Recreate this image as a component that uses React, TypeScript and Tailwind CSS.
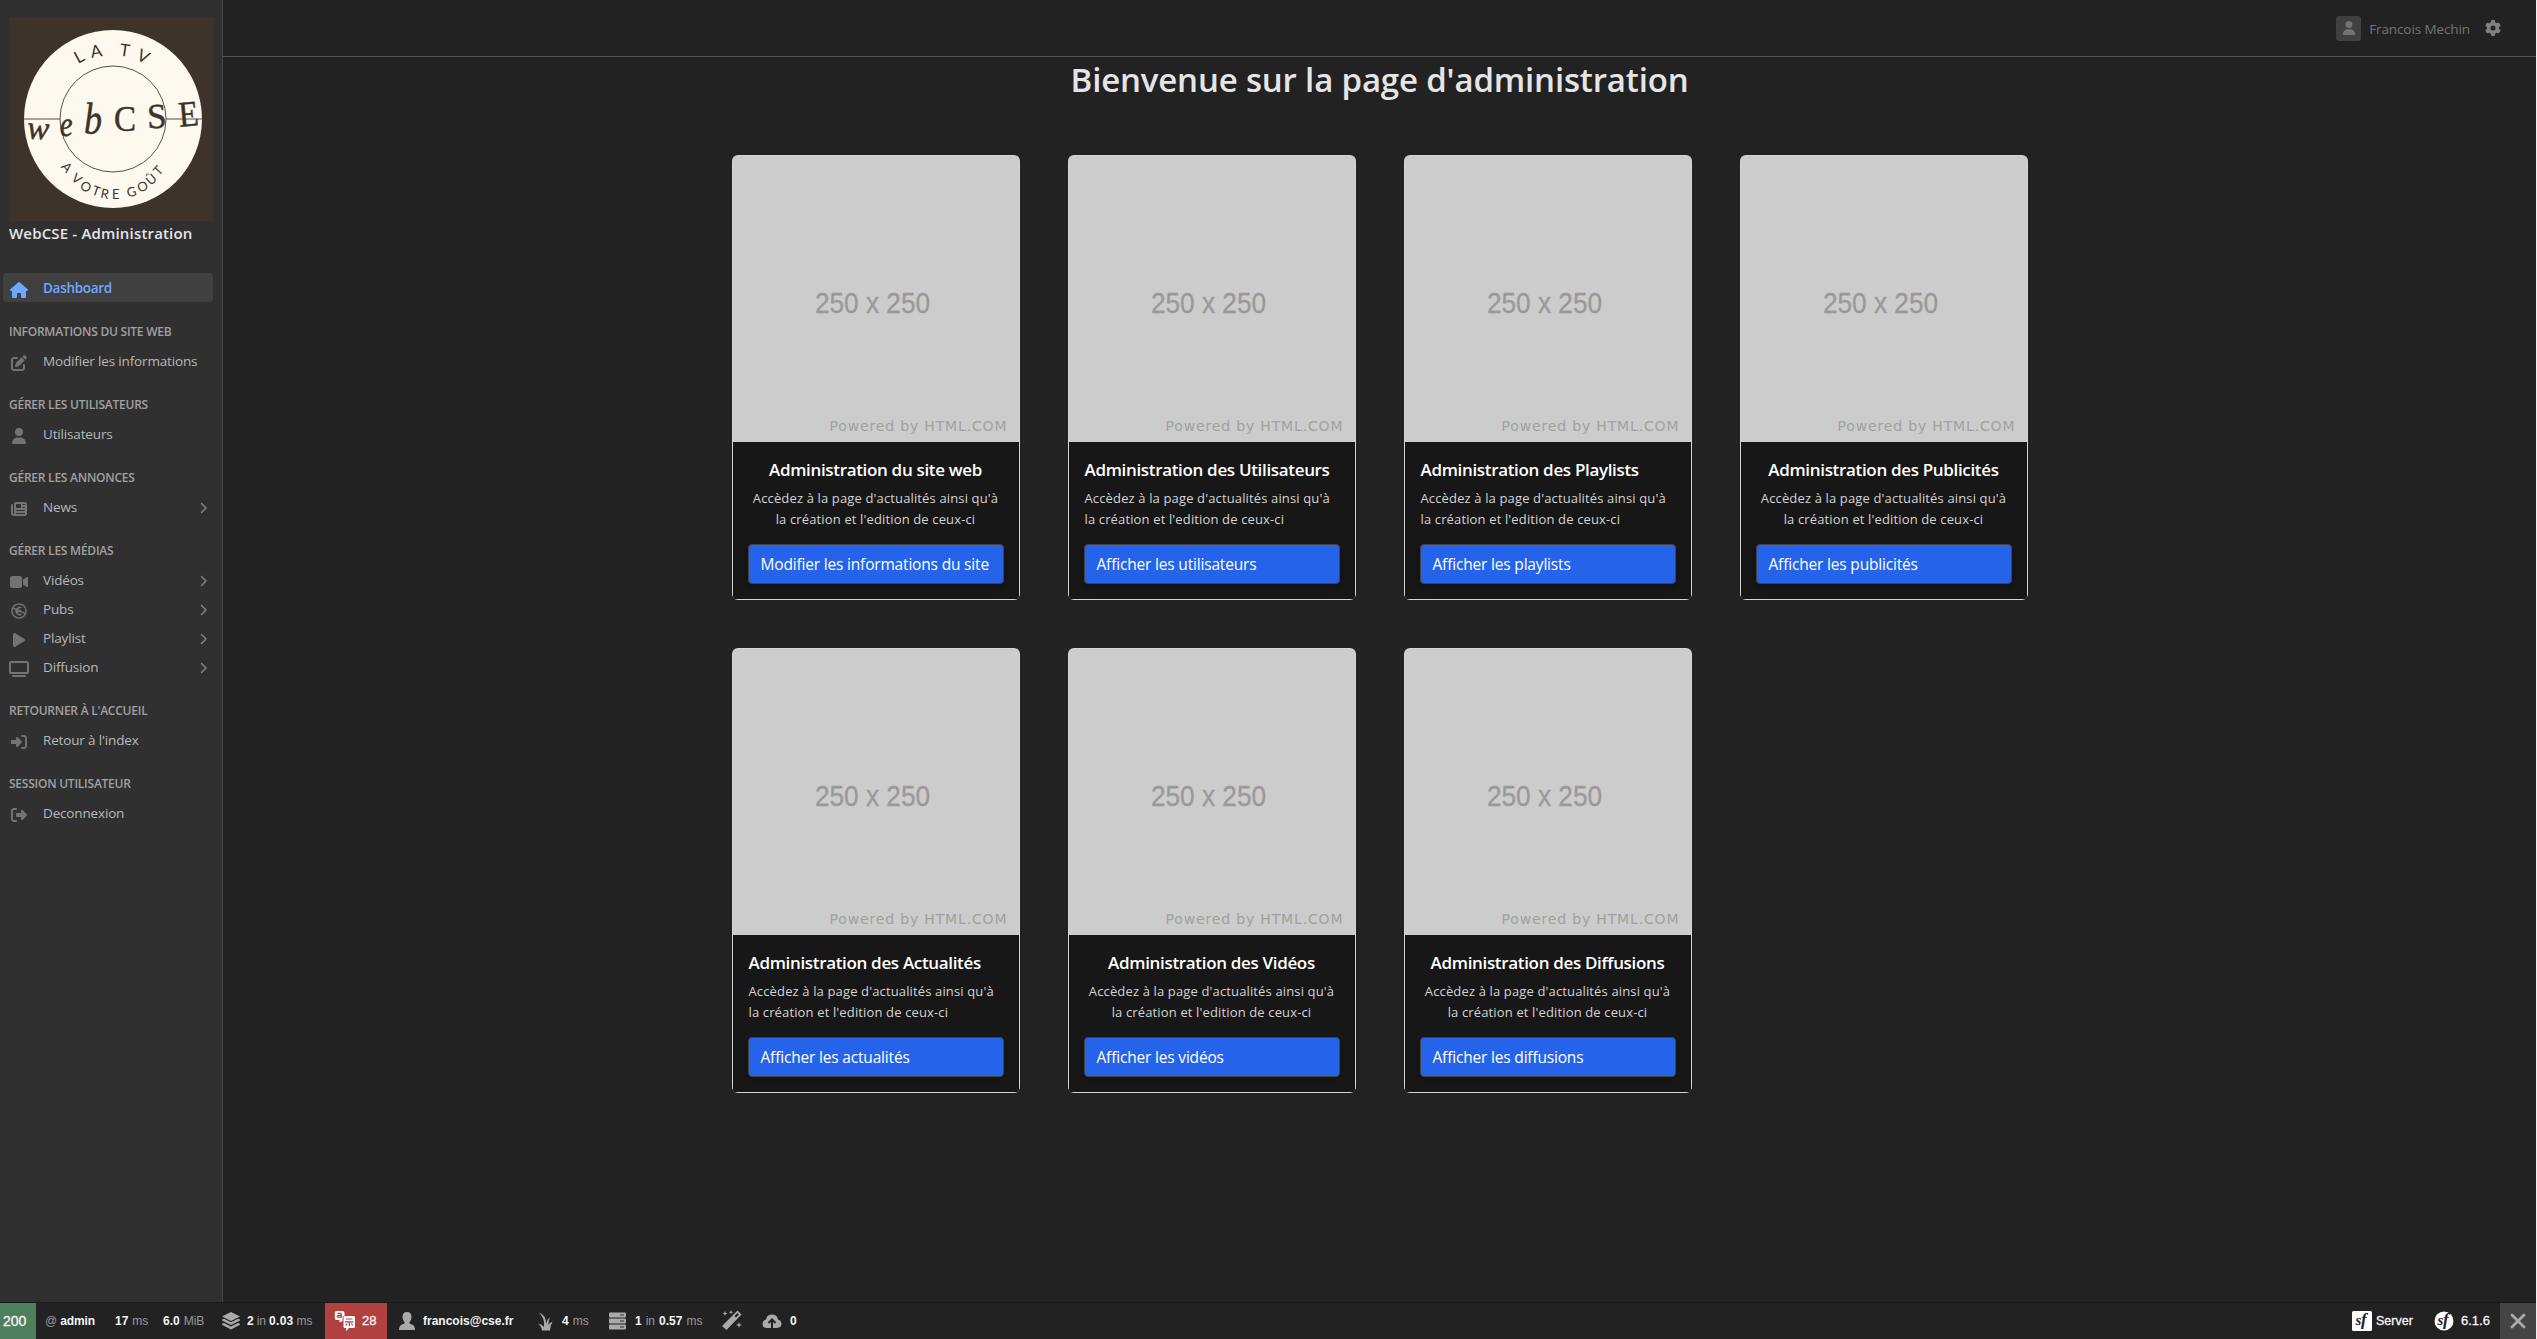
import React from "react";
import {
  FaHouse, FaPenToSquare, FaUser, FaNewspaper, FaVideo, FaCreativeCommonsNcEu, FaPlay, FaTv,
  FaRightToBracket, FaRightFromBracket, FaChevronRight, FaGear,
} from "react-icons/fa6";
import type { IconType } from "react-icons";

type Item = { label: string; icon: IconType; size: number; sub?: boolean };
type Group = { title: string; items: Item[] };

const groups: Group[] = [
  { title: "INFORMATIONS DU SITE WEB", items: [{ label: "Modifier les informations", icon: FaPenToSquare, size: 16 }] },
  { title: "GÉRER LES UTILISATEURS", items: [{ label: "Utilisateurs", icon: FaUser, size: 16 }] },
  { title: "GÉRER LES ANNONCES", items: [{ label: "News", icon: FaNewspaper, size: 16, sub: true }] },
  {
    title: "GÉRER LES MÉDIAS",
    items: [
      { label: "Vidéos", icon: FaVideo, size: 18, sub: true },
      { label: "Pubs", icon: FaCreativeCommonsNcEu, size: 16, sub: true },
      { label: "Playlist", icon: FaPlay, size: 16, sub: true },
      { label: "Diffusion", icon: FaTv, size: 20, sub: true },
    ],
  },
  { title: "RETOURNER À L'ACCUEIL", items: [{ label: "Retour à l'index", icon: FaRightToBracket, size: 16 }] },
  { title: "SESSION UTILISATEUR", items: [{ label: "Deconnexion", icon: FaRightFromBracket, size: 16 }] },
];

type Card = { title: string; button: string; center: boolean };
const cards: Card[] = [
  { title: "Administration du site web", button: "Modifier les informations du site", center: true },
  { title: "Administration des Utilisateurs", button: "Afficher les utilisateurs", center: false },
  { title: "Administration des Playlists", button: "Afficher les playlists", center: false },
  { title: "Administration des Publicités", button: "Afficher les publicités", center: true },
  { title: "Administration des Actualités", button: "Afficher les actualités", center: false },
  { title: "Administration des Vidéos", button: "Afficher les vidéos", center: true },
  { title: "Administration des Diffusions", button: "Afficher les diffusions", center: true },
];

function Logo() {
  return (
    <svg viewBox="0 0 204 204" className="block h-[204px] w-[204px] shrink-0">
      <rect width="204" height="204" fill="#3d332b" />
      <circle cx="104" cy="102" r="89" fill="#fdf9ee" />
      <g stroke="#55504a" strokeWidth="1" fill="none">
        <circle cx="104" cy="102" r="53" />
        <path d="M15 102H51M157 102H193" />
      </g>
      <g fill="#3d332b" fontFamily="Lato, sans-serif" fontSize="17">
        <text transform="translate(69 47) rotate(-28)">L</text>
        <text transform="translate(82.500 41) rotate(-10)">A</text>
        <text transform="translate(110 38.500) rotate(8)">T</text>
        <text transform="translate(126.500 42) rotate(27)">V</text>
      </g>
      <g fill="#3d332b" fontFamily="Lato, sans-serif" fontSize="13">
        <text transform="translate(51.500 150) rotate(49)">A</text>
        <text transform="translate(61.500 162.500) rotate(39)">V</text>
        <text transform="translate(70 171) rotate(31)">O</text>
        <text transform="translate(82 177) rotate(20)">T</text>
        <text transform="translate(91 180.500) rotate(11)">R</text>
        <text transform="translate(103 182) rotate(0)">E</text>
        <text transform="translate(119 180.500) rotate(-14)">G</text>
        <text transform="translate(131 176) rotate(-27)">O</text>
        <text transform="translate(141.500 169) rotate(-40)">Û</text>
        <text transform="translate(150 159.500) rotate(-48)">T</text>
      </g>
      <g fill="#3d332b" stroke="#3d332b" strokeWidth=".5" fontFamily="'Liberation Serif', serif">
        <text x="18" y="122" fontSize="33" fontStyle="italic" textLength="22" lengthAdjust="spacingAndGlyphs" transform="rotate(3 28 115)">w</text>
        <text x="51" y="119" fontSize="35" fontStyle="italic" textLength="13" lengthAdjust="spacingAndGlyphs" transform="rotate(-3 56 112)">e</text>
        <text x="75" y="117" fontSize="45" fontStyle="italic" textLength="18" lengthAdjust="spacingAndGlyphs">b</text>
        <text x="105" y="114" fontSize="36" textLength="22" lengthAdjust="spacingAndGlyphs">C</text>
        <text x="138" y="111" fontSize="35" transform="rotate(-2 148 100)">S</text>
        <text x="169.500" y="109" fontSize="36" textLength="20" lengthAdjust="spacingAndGlyphs" transform="rotate(-5 180 98)">E</text>
      </g>
    </svg>
  );
}

function Row({ item, active }: { item: Item; active?: boolean }) {
  const Icon = item.icon;
  return (
    <a className={"flex h-[29px] w-[210px] items-center rounded-[4px] pl-1.5 pr-1 text-[13.5px] " + (active ? "bg-[#404040] font-semibold tracking-[-0.3px] text-[#6ea8fe]" : "tracking-[-0.16px] text-[#b8b8b8]")}>
      <span className={"mr-[14px] mt-[5px] flex w-5 justify-center " + (active ? "" : "text-[#737373]")}>
        <Icon size={item.size} />
      </span>
      <span className="mt-[3px] grow whitespace-nowrap leading-none">{item.label}</span>
      {item.sub && <FaChevronRight size={12} className="mt-[3px] text-[#808080]" />}
    </a>
  );
}

function Sidebar() {
  return (
    <aside className="flex w-[223px] shrink-0 flex-col border-r border-[#484848] bg-[#303030] pl-[3px] pt-[17px]">
      <div className="ml-1.5"><Logo /></div>
      <div className="ml-1.5 h-[52px] whitespace-nowrap pt-px text-[15px] font-semibold leading-[22px] tracking-[0.17px] text-[#e5e5e5]">WebCSE - Administration</div>
      <Row active item={{ label: "Dashboard", icon: FaHouse, size: 18 }} />
      {groups.map((g) => (
        <div key={g.title}>
          <div className="flex h-[44px] items-end whitespace-nowrap pb-[6px] pl-1.5 text-[12px] font-semibold leading-[17px] tracking-[-0.24px] text-[#a0a0a0]">{g.title}</div>
          {g.items.map((i) => <Row key={i.label} item={i} />)}
        </div>
      ))}
    </aside>
  );
}

function CardView({ card }: { card: Card }) {
  return (
    <article className="h-[445px] w-[288px] overflow-hidden rounded-[6px] bg-[#d4d4d4] p-px">
      <div className="flex h-[443px] flex-col bg-[#171717]">
        <svg viewBox="0 0 286 286" className="h-[286px] w-[286px] shrink-0 bg-[#cccccc]" fill="#999999">
          <text x="82" y="156.500" fontSize="30" textLength="115" lengthAdjust="spacingAndGlyphs" fontFamily="'Liberation Sans', sans-serif" stroke="#999999" strokeWidth=".3">250 x 250</text>
          <text x="96.500" y="275" fontSize="14" textLength="177" fontFamily="'DejaVu Sans', sans-serif" opacity=".85">Powered by HTML.COM</text>
        </svg>
        <div className="flex flex-col p-[15px]">
          <div className={"flex flex-col " + (card.center ? "items-center text-center" : "items-start pl-px")}>
            <h2 className="whitespace-nowrap text-[17px] font-semibold leading-[26px] tracking-[-0.33px] text-white">{card.title}</h2>
            <p className="mt-[5px] whitespace-nowrap text-[13px] leading-[21px] tracking-[0.14px] text-[#d4d4d4]">Accèdez à la page d'actualités ainsi qu'à<br />la création et l'edition de ceux-ci</p>
          </div>
          <button className="mt-[14px] flex h-[40px] items-center whitespace-nowrap rounded-[4px] border border-[#444] bg-[#2563eb] px-3 pt-0.5 text-[15.5px] tracking-[-0.18px] text-white shadow-md">{card.button}</button>
        </div>
      </div>
    </article>
  );
}

function Dim({ children }: { children: React.ReactNode }) {
  return <span className="text-[#999]">{children}</span>;
}

function Sf({ round }: { round?: boolean }) {
  return (
    <svg viewBox="0 0 20 20" className="h-5 w-5">
      {round ? <circle cx="10" cy="10" r="9.500" fill="#fff" /> : <rect width="20" height="20" rx="1.500" fill="#fff" />}
      <text x="3.500" y="13.500" fontSize="15" fontStyle="italic" fontWeight="bold" fontFamily="'Liberation Serif', serif" fill="#222">s</text>
      <text x="9" y="14" fontSize="17" fontStyle="italic" fontWeight="bold" fontFamily="'Liberation Serif', serif" fill="#222">f</text>
    </svg>
  );
}

function Toolbar() {
  return (
    <footer className="flex h-[37px] shrink-0 items-stretch whitespace-nowrap border-t border-[#191919] bg-[#222222] font-['Liberation_Sans',sans-serif] text-[12px] text-[#f5f5f5]">
      <div className="flex w-[36px] items-center bg-[#4f805d] pl-[3px] pt-px text-[14px] [-webkit-text-stroke:0.3px]">200</div>
      <div className="flex w-[70px] items-center gap-[3px] pl-[9px]"><Dim>@</Dim><b className="tracking-[-0.1px]">admin</b></div>
      <div className="flex w-[48px] items-center gap-1 pl-[9px]"><b>17</b><Dim>ms</Dim></div>
      <div className="flex w-[60px] items-center gap-1 pl-[9px]"><b>6.0</b><Dim>MiB</Dim></div>
      <div className="flex w-[111px] items-center gap-[3px] pl-[7px]">
        <svg viewBox="0 0 20 20" className="mr-[3px] h-5 w-5" fill="#aaa"><path d="M10 1 19 5.500 10 10 1 5.500z" /><path d="M1 8.500 3 7.800 10 11.300 17 7.800 19 8.500V9.500L10 14 1 9.500z" /><path d="M1 12.700 3 12 10 15.500 17 12 19 12.700V13.700L10 18.500 1 13.700z" /></svg>
        <b>2</b><Dim>in</Dim><b className="tracking-[0.3px]">0.03</b><Dim>ms</Dim>
      </div>
      <div className="flex w-[62px] items-center bg-[#b0413e] pl-[9px] text-[13px] [-webkit-text-stroke:0.3px]">
        <svg viewBox="0 0 22 22" className="mr-[6px] h-[22px] w-[22px]" fill="#fff">
          <path d="M2.500 1H8.500Q10.500 1 10.500 3V6H10Q8.500 6 8.500 8V11L5.500 12.500V10H2.500Q.8 10 .8 8V3Q.8 1 2.500 1z" />
          <rect x="9.500" y="6" width="11.500" height="12" rx="1.500" /><path d="M12 17v4l4-4z" />
          <path d="M3.500 3.300h3q.8 0 .8.800v3H4.200q-1 0-1-.9 0-.9 1-.9h3M12 9h6.500M11 11.800h8.500M15.300 12v4.200M13 13.500l-1.300 2M17.300 13.500l1.500 2" fill="none" stroke="#b0413e" strokeWidth="1.200" />
        </svg>28
      </div>
      <div className="flex w-[140px] items-center pl-[12px]">
        <svg viewBox="0 0 16 18" className="mr-[8px] h-[18px] w-4" fill="#aaa"><path d="M8 0Q12.500 0 12.500 5 12.500 8.500 10.300 10.500 10.300 12 13 12.500 16 13.500 16 18H0Q0 13.500 3 12.500 5.700 12 5.700 10.500 3.500 8.500 3.500 5 3.500 0 8 0z" /></svg>
        <b>francois@cse.fr</b>
      </div>
      <div className="flex w-[72px] items-center gap-1 pl-[10px]">
        <svg viewBox="0 0 16 19" className="mr-[5px] h-[19px] w-4" fill="#aaa"><path d="M2 .5Q9 3 9.200 12Q10 7 13 5.500 11.500 8 11.500 13Q13 10 15.500 9.500 13.500 13 13 18.500H5Q4.500 14 1 11.500 5 12 7 15 8 6 2 .5z" /></svg>
        <b>4</b><Dim>ms</Dim>
      </div>
      <div className="flex w-[114px] items-center gap-1 pl-[10px]">
        <svg viewBox="0 0 17 18" className="mr-[5px] h-[18px] w-[17px]"><g fill="#aaa"><rect y=".5" width="17" height="5" rx="1" /><rect y="6.500" width="17" height="5" rx="1" /><rect y="12.500" width="17" height="5" rx="1" /></g><path d="M11 3h4M11 9h4M11 15h4" stroke="#333" /></svg>
        <b>1</b><Dim>in</Dim><b>0.57</b><Dim>ms</Dim>
      </div>
      <div className="flex w-[40px] items-center pb-[3px] pl-[9px]">
        <svg viewBox="0 0 20 20" className="h-5 w-5" fill="#aaa"><path fillRule="evenodd" d="M15.500.5 19.500 4.500 4.500 20 0 16zM15.500 3 12.500 6 14 7.500 17 4.500z" /><path d="m3 1 .7 1.800 1.800.7-1.800.7L3 6l-.7-1.800L.500 3.500l1.800-.7zM9 0l.6 1.600L11.200 2.200l-1.600.6L9 4.400l-.6-1.600L6.800 2.200l1.600-.6zM17 12l.8 2.200L20 15l-2.200.8L17 18l-.8-2.200L14 15l2.200-.8z" /></svg>
      </div>
      <div className="flex w-[60px] items-center gap-2 pl-[9px]">
        <svg viewBox="0 0 20 16" className="h-4 w-5"><path d="M5 15Q.500 15 .500 11 .500 7.500 4 6.500 5 1.500 10 1.500T16 6.500Q19.500 7.500 19.500 11T15 15z" fill="#aaa" /><path d="M10 15V8M6.500 10 10 6.500 13.500 10" fill="none" stroke="#222" strokeWidth="2" /></svg>
        <b>0</b>
      </div>
      <div className="grow" />
      <div className="flex w-[74px] items-center gap-1 text-[12.5px] [-webkit-text-stroke:0.3px]"><Sf />Server</div>
      <div className="ml-[8px] flex w-[66px] items-center gap-[7px] text-[13px] [-webkit-text-stroke:0.3px]"><Sf round />6.1.6</div>
      <div className="flex w-[36px] items-center justify-center bg-[#444]">
        <svg viewBox="0 0 16 16" className="h-4 w-4" stroke="#aaa" strokeWidth="2.800" strokeLinecap="round"><path d="M2 2 14 14M14 2 2 14" /></svg>
      </div>
    </footer>
  );
}

export default function App() {
  return (
    <div className="flex h-[1339px] w-[2537px] flex-col border-r border-[#eee] bg-[#222222] font-['Open_Sans',sans-serif]">
      <div className="flex min-h-0 grow">
        <Sidebar />
        <div className="flex grow flex-col">
          <header className="flex h-[57px] items-center justify-end border-b border-[#555] pr-[35px]">
            <span className="flex h-[25px] w-[25px] items-center justify-center rounded-[3px] bg-[#404040] text-[#737373]"><FaUser size={14} /></span>
            <span className="ml-2 mr-[15px] mt-[3px] whitespace-nowrap text-[13.5px] tracking-[-0.1px] text-[#737373]">Francois Mechin</span>
            <FaGear size={16} color="#808080" />
          </header>
          <main className="flex flex-col items-center">
            <h1 className="h-[98px] whitespace-nowrap text-[33px] font-semibold leading-[46px] tracking-[-0.17px] text-[#e5e5e5]">Bienvenue sur la page d'administration</h1>
            <div className="grid grid-cols-[repeat(4,288px)] gap-12">
              {cards.map((c) => <CardView key={c.title} card={c} />)}
            </div>
          </main>
        </div>
      </div>
      <Toolbar />
    </div>
  );
}
